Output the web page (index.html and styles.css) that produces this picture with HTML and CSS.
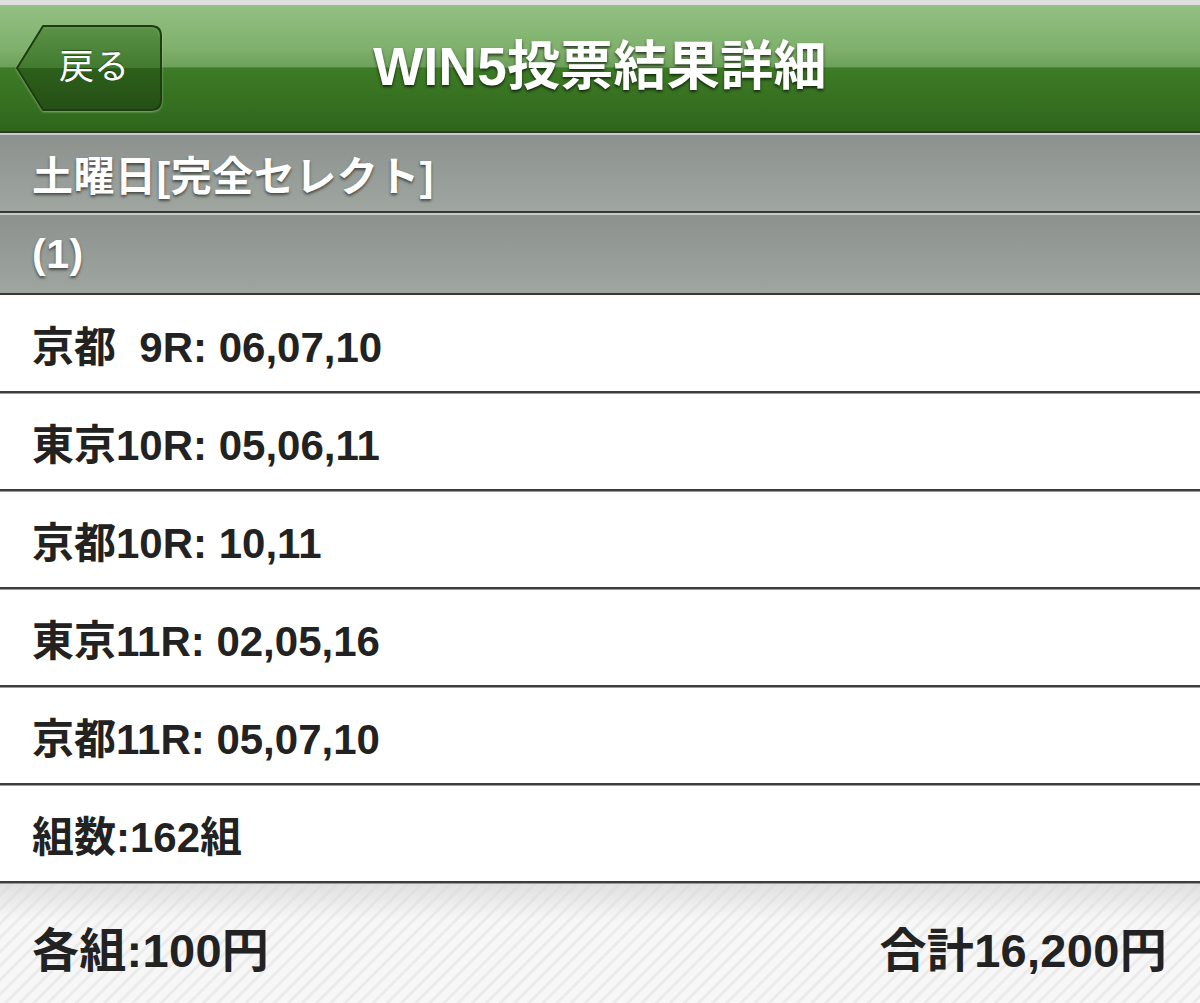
FILE: index.html
```html
<!doctype html>
<html>
  <head>
    <meta charset="utf-8">
    <title>WIN5投票結果詳細</title>
    <link rel="stylesheet" href="styles.css">
  </head>
  <body>
    <div class="navbar">
      <a class="backbtn" href="#">
        <svg class="backshape" width="150" height="90" viewBox="0 0 150 90">
          <defs>
            <linearGradient id="btnfill" x1="0" y1="0" x2="0" y2="1">
              <stop offset="0" stop-color="#5b9246"/>
              <stop offset="0.5" stop-color="#427a30"/>
              <stop offset="0.5" stop-color="#2d601b"/>
              <stop offset="1" stop-color="#254f15"/>
            </linearGradient>
          </defs>
          <path d="M3 45 L29 3 H137 Q147 3 147 13 V77 Q147 87 137 87 H29 Z" fill="url(#btnfill)" stroke="#1d3c11" stroke-width="2" stroke-linejoin="round"/>
          <path d="M30 5 H137 Q145 5 145 13" fill="none" stroke="#7aa866" stroke-width="1" opacity="0.6"/>
        </svg>
        <span class="backlabel">戻る</span>
      </a>
      <h1 class="navtitle">WIN5投票結果詳細</h1>
    </div>

    <div class="band">土曜日[完全セレクト]</div>
    <div class="band">(1)</div>

    <ul class="betlist">
      <li>京都&nbsp;&nbsp;9R:&nbsp;06,07,10</li>
      <li>東京10R:&nbsp;05,06,11</li>
      <li>京都10R:&nbsp;10,11</li>
      <li>東京11R:&nbsp;02,05,16</li>
      <li>京都11R:&nbsp;05,07,10</li>
      <li>組数:162組</li>
    </ul>

    <div class="totals">
      <span>各組:100円</span>
      <span>合計16,200円</span>
    </div>
  </body>
</html>
```

FILE: styles.css
```css
body {
  margin: 0;
  font-family: 'Liberation Sans', 'Noto Sans CJK JP', sans-serif;
  background: #fff;
  width: 1200px;
  height: 1003px;
  overflow: hidden;
}

.navbar {
  position: relative;
  height: 126px;
  border-top: 5px solid #dedfde;
  border-bottom: 2px solid #2e3a2a;
  background: linear-gradient(to bottom, #93c083 0%, #7fb06c 35%, #6da15a 49%, #3d7b26 50%, #356f20 80%, #2f661c 100%);
  display: flex;
  align-items: center;
  justify-content: center;
}
.navtitle {
  margin: 0 0 12px 0;
  font-size: 53px;
  font-weight: bold;
  color: #fff;
  text-shadow: 0 2px 3px rgba(0, 0, 0, 0.65);
  letter-spacing: 0.3px;
}

/* back button sits over the left end of the bar */
.backbtn {
  position: absolute;
  left: 14px;
  top: 18px;
  width: 150px;
  height: 90px;
  text-decoration: none;
}
.backshape {
  display: block;
  filter: drop-shadow(0 1px 1px rgba(190, 220, 175, 0.6));
}
.backlabel {
  position: absolute;
  left: 45px;
  top: 0;
  height: 90px;
  line-height: 88px;
  font-size: 35px;
  font-weight: normal;
  color: #fff;
  text-shadow: 0 -1px 1px rgba(0, 0, 0, 0.4);
}

.band {
  height: 76px;
  border-top: 2px solid #c6cdc7;
  border-bottom: 2px solid #363836;
  background: linear-gradient(to bottom, #8c918d, #9fa6a0);
  padding-left: 32px;
  display: flex;
  align-items: center;
  font-size: 41px;
  font-weight: bold;
  color: #fff;
  text-shadow: 0 2px 3px rgba(0, 0, 0, 0.55);
  letter-spacing: 0.5px;
}
.band + .band {
  height: 78px;
}

.betlist {
  list-style: none;
  margin: 0;
  padding: 0;
}
.betlist li {
  height: 96px;
  border-bottom: 2px solid #3d3d3d;
  box-shadow: 0 1px 0 #9a9a9a;
  padding-left: 32px;
  display: flex;
  align-items: center;
  font-size: 42px;
  font-weight: bold;
  color: #222;
}

.totals {
  height: 120px;
  margin-top: 1px;
  padding: 4px 33px 0 32px;
  box-sizing: border-box;
  display: flex;
  align-items: center;
  justify-content: space-between;
  background:
    linear-gradient(to bottom, rgba(215, 215, 215, 0.7), rgba(255, 255, 255, 0) 30%),
    repeating-linear-gradient(135deg, #f7f7f7 0px, #f7f7f7 6px, #ebebeb 7px, #ebebeb 9px, #f7f7f7 10px);
  font-size: 47px;
  font-weight: bold;
  color: #222;
  letter-spacing: 0.3px;
}
```
